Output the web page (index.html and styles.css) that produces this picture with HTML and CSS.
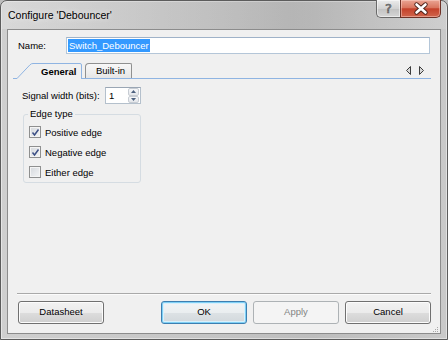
FILE: index.html
```html
<!DOCTYPE html>
<html>
<head>
<meta charset="utf-8">
<title>Configure 'Debouncer'</title>
<link rel="stylesheet" href="styles.css">
</head>
<body>
<div class="window">
  <div class="titlebar">
    <span class="title">Configure 'Debouncer'</span>
    <div class="caption">
      <div class="cap-btn help">?</div>
      <div class="cap-btn close">
        <svg width="41" height="17" viewBox="0 0 41 17">
          <path d="M15.5 4.5 L24.5 12.5 M24.5 4.5 L15.5 12.5" stroke="#4a2018" stroke-width="4.4" stroke-linecap="round"/>
          <path d="M15.5 4.5 L24.5 12.5 M24.5 4.5 L15.5 12.5" stroke="#ffffff" stroke-width="2.6" stroke-linecap="round"/>
        </svg>
      </div>
    </div>
  </div>
  <div class="client">
    <div class="name-row">
      <span class="lbl name-lbl">Name:</span>
      <div class="textbox"><span class="sel">Switch_Debouncer</span></div>
    </div>
    <div class="tabstrip">
      <div class="tab active">
        <svg class="tab-shape" width="66" height="16" viewBox="0 0 66 16">
          <path d="M0 16 L0 15.5 L13 1.8 Q14.2 0.5 16 0.5 L63 0.5 Q64.5 0.5 64.5 2 L64.5 16 Z" fill="#f0f0f0"/>
          <path d="M0 15.5 L13 1.8 Q14.2 0.5 16 0.5 L63 0.5 Q64.5 0.5 64.5 2 L64.5 16" fill="none" stroke="#8fb4e2" stroke-width="1"/>
        </svg>
        <span class="tab-text">General</span>
      </div>
      <div class="tab plain">Built-in</div>
      <svg class="tab-nav" width="18" height="9" viewBox="0 0 18 9">
        <polygon points="4.5,0.5 4.5,8.5 0.5,4.5" fill="#d8d8d8" stroke="#3c3c3c" stroke-width="1"/>
        <polygon points="13.5,0.5 13.5,8.5 17.5,4.5" fill="#d8d8d8" stroke="#3c3c3c" stroke-width="1"/>
      </svg>
    </div>
    <div class="panel">
      <div class="signal-row">
        <span class="lbl sig-lbl">Signal width (bits):</span>
        <div class="spin">
          <span class="spin-val">1</span>
          <div class="spin-btns">
            <div class="spin-btn"><svg width="5" height="3" viewBox="0 0 5 3"><polygon points="0,3 5,3 2.5,0" fill="#4c607f"/></svg></div>
            <div class="spin-btn"><svg width="5" height="3" viewBox="0 0 5 3"><polygon points="0,0 5,0 2.5,3" fill="#4c607f"/></svg></div>
          </div>
        </div>
      </div>
      <fieldset class="group">
        <legend>Edge type</legend>
        <div class="check">
          <span class="box"><svg width="9" height="9" viewBox="0 0 9 9"><path d="M1.5 4.5 L3.5 7 L7.5 1.5" fill="none" stroke="#3d5086" stroke-width="1.5"/></svg></span>
          <span class="check-lbl">Positive edge</span>
        </div>
        <div class="check">
          <span class="box"><svg width="9" height="9" viewBox="0 0 9 9"><path d="M1.5 4.5 L3.5 7 L7.5 1.5" fill="none" stroke="#3d5086" stroke-width="1.5"/></svg></span>
          <span class="check-lbl">Negative edge</span>
        </div>
        <div class="check">
          <span class="box"></span>
          <span class="check-lbl">Either edge</span>
        </div>
      </fieldset>
    </div>
    <div class="footer">
      <div class="sep"></div>
      <div class="buttons">
        <div class="btn">Datasheet</div>
        <div class="spacer"></div>
        <div class="btn default">OK</div>
        <div class="btn disabled">Apply</div>
        <div class="btn">Cancel</div>
      </div>
    </div>
    <svg class="grip" width="7" height="7" viewBox="0 0 7 7">
      <rect x="5" y="1" width="1" height="1" fill="#a8a8a8"/>
      <rect x="3" y="3" width="1" height="1" fill="#a8a8a8"/>
      <rect x="5" y="3" width="1" height="1" fill="#a8a8a8"/>
      <rect x="1" y="5" width="1" height="1" fill="#a8a8a8"/>
      <rect x="3" y="5" width="1" height="1" fill="#a8a8a8"/>
      <rect x="5" y="5" width="1" height="1" fill="#a8a8a8"/>
    </svg>
  </div>
</div>
</body>
</html>
```
FILE: styles.css
```css
* { box-sizing: border-box; }
html, body { margin: 0; padding: 0; }
body {
  width: 448px;
  height: 340px;
  font-family: "Liberation Sans", Arial, sans-serif;
  font-size: 9.5px;
  color: #000;
  background: #bdbdbd;
  overflow: hidden;
}
.window {
  width: 448px;
  height: 340px;
  border: 1px solid #5c5c5c;
  border-radius: 7px 7px 0 0;
  padding: 0 6px 5px 6px;
  display: flex;
  flex-direction: column;
  background: linear-gradient(90deg, #cfcfcf 0%, #c4c4c4 50%, #bdbdbd 70%, #c9c9c9 100%);
  box-shadow: inset 0 0 0 1px rgba(255,255,255,0.45);
}
.titlebar {
  height: 28px;
  display: flex;
  align-items: flex-start;
  justify-content: space-between;
  background: linear-gradient(90deg, rgba(230,230,230,0.4), rgba(160,160,160,0.3) 65%, rgba(220,220,220,0.3));
  margin: 0 -6px;
  padding: 0 6px 0 7px;
  border-radius: 6px 6px 0 0;
}
.title {
  font-size: 10.5px;
  margin-top: 8px;
  color: #000;
  text-shadow: 0 0 6px rgba(255,255,255,0.9);
}
.caption {
  display: flex;
  margin-top: -1px;
}
.cap-btn {
  height: 18px;
  border: 1px solid #6a6a6a;
  border-top: none;
}
.help {
  width: 24px;
  border-right: none;
  border-radius: 0 0 0 5px;
  background: linear-gradient(#ececec, #d2d2d2 50%, #c2c2c2 52%, #d6d6d6);
  text-align: center;
  font-family: "DejaVu Sans", sans-serif;
  font-size: 13px;
  line-height: 17px;
  color: #8a8a8a;
  -webkit-text-stroke: 0.6px #5a5a5a;
  box-shadow: inset 0 0 0 1px rgba(255,255,255,0.5);
}
.close {
  width: 41px;
  border-radius: 0 0 5px 0;
  border-color: #6e3126;
  background: linear-gradient(#eaa594, #d9765f 45%, #c4412a 52%, #d0654c);
  box-shadow: inset 0 0 0 1px rgba(255,220,210,0.45);
}
.close svg { display: block; }

.client {
  flex: 1;
  position: relative;
  border: 1px solid #8c8c8c;
  background: #f0f0f0;
  display: flex;
  flex-direction: column;
}
.name-row {
  display: flex;
  align-items: center;
  margin-top: 7px;
  padding-left: 10px;
}
.name-lbl { width: 48px; }
.textbox {
  width: 364px;
  height: 17px;
  background: #fff;
  border: 1px solid #b4c6d8;
  border-top-color: #9fb2c8;
  padding: 1px 0 0 1px;
}
.sel {
  display: inline-block;
  height: 13px;
  line-height: 13px;
  background: #3399ff;
  color: #fff;
  padding: 0 1px;
}
.tabstrip {
  display: flex;
  align-items: flex-end;
  height: 16px;
  margin: 9px 9px 0 5px;
  border-bottom: 1px solid #8fb4e2;
}
.tab {
  position: relative;
  height: 15px;
  line-height: 14px;
}
.tab.active {
  width: 65px;
  height: 16px;
  margin-left: 4px;
  margin-bottom: -1px;
  z-index: 1;
}
.tab-shape {
  position: absolute;
  left: 0;
  top: 0;
}
.tab-text {
  position: relative;
  display: block;
  padding-left: 24px;
  line-height: 17px;
  font-weight: bold;
}
.tab.plain {
  width: 47px;
  margin-left: 3px;
  padding-left: 10px;
  border: 1px solid #8f9090;
  border-bottom: none;
  border-radius: 4px 2px 0 0;
  background: linear-gradient(#f8f8f8, #e6e6e6);
}
.tab-nav {
  margin-left: auto;
  margin-right: 7px;
  align-self: center;
}
.panel {
  padding-left: 14px;
}
.signal-row {
  display: flex;
  align-items: center;
  margin-top: 8px;
}
.sig-lbl { width: 83px; }
.spin {
  width: 36px;
  height: 17px;
  display: flex;
  background: #fff;
  border: 1px solid #b4c0cc;
  border-top-color: #9aa6b4;
}
.spin-val {
  flex: 1;
  padding-left: 3px;
  line-height: 15px;
}
.spin-btns {
  width: 11px;
  display: flex;
  flex-direction: column;
  margin: 0 1px 0 0;
}
.spin-btn {
  flex: 1;
  display: flex;
  align-items: center;
  justify-content: center;
  border: 1px solid #c7ccd3;
  border-radius: 2px;
  background: linear-gradient(#f6f7f9, #e3e6ea);
}
.spin-btn svg { display: block; }
.group {
  margin: 4px 0 0 1px;
  width: 118px;
  padding: 2px 0 0 4px;
  border: 1px solid #d5dce2;
  border-radius: 3px;
}
.group legend {
  padding: 0 2px;
  line-height: 12px;
}
.check {
  display: flex;
  align-items: center;
  height: 20px;
}
.box {
  width: 12px;
  height: 12px;
  margin-left: 1px;
  border: 1px solid #8e8f8f;
  background: linear-gradient(135deg, #d4d7dc, #f4f5f6);
  box-shadow: inset 0 0 0 1px #f4f4f4;
  display: flex;
  align-items: center;
  justify-content: center;
}
.box svg { display: block; }
.check-lbl { margin-left: 4px; }
.footer {
  margin-top: auto;
}
.sep {
  margin: 0 9px;
  height: 2px;
  border-top: 1px solid #a9a9a9;
  border-bottom: 1px solid #fbfbfb;
}
.buttons {
  display: flex;
  gap: 6px;
  padding: 6px 9px 9px 10px;
}
.spacer { flex: 1; }
.btn {
  width: 86px;
  height: 23px;
  border: 1px solid #707070;
  border-radius: 3px;
  text-align: center;
  line-height: 20px;
  background: linear-gradient(#f2f2f2, #ebebeb 50%, #dddddd 51%, #cfcfcf);
  box-shadow: inset 0 0 0 1px #fcfcfc;
}
.btn.default {
  border-color: #3c7fb1;
  box-shadow: inset 0 0 0 1px #7fd0f5, inset 0 0 0 2px #d8f0fc;
  background: linear-gradient(#f2f4f5, #eaeef0 50%, #dde2e5 51%, #d2d8dc);
}
.btn.disabled {
  border-color: #adb2b5;
  background: #f4f4f4;
  color: #838383;
  box-shadow: none;
}
.grip {
  position: absolute;
  right: 1px;
  bottom: 0px;
}
```
